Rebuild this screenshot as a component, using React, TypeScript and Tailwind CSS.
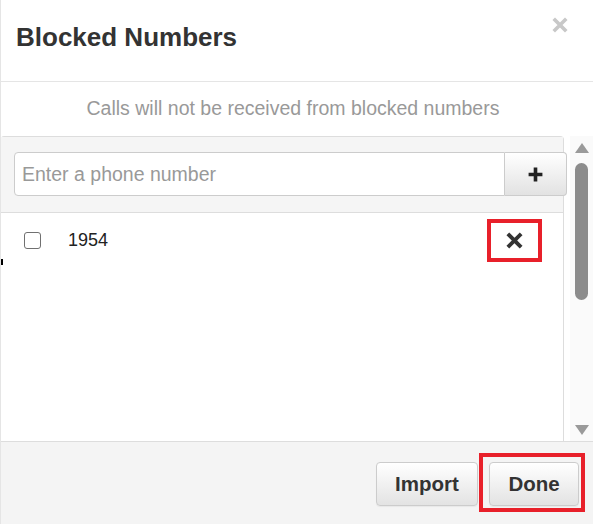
import { useState } from "react";

function CloseGlyph({ className }: { className?: string }) {
  return (
    <svg viewBox="0 0 16 16" className={className} fill="none">
      <path d="M3 3 L13 13 M13 3 L3 13" stroke="currentColor" strokeWidth="3.6" strokeLinecap="square" />
    </svg>
  );
}

function PlusGlyph({ className }: { className?: string }) {
  return (
    <svg viewBox="0 0 16 16" className={className} fill="none">
      <path d="M8 1.5 V14.5 M1.5 8 H14.5" stroke="currentColor" strokeWidth="3.4" />
    </svg>
  );
}

function FakeScrollbar() {
  return (
    <div className="w-[23px] ml-[6px] bg-[#fafafa] flex flex-col items-center">
      <div className="mt-[7px] w-0 h-0 border-l-[7px] border-r-[7px] border-b-[10px] border-l-transparent border-r-transparent border-b-[#9a9a9a]" />
      <div className="mt-[10px] w-[13px] h-[137px] rounded-full bg-[#8c8c8c]" />
      <div className="mt-auto mb-[6px] w-0 h-0 border-l-[7px] border-r-[7px] border-t-[10px] border-l-transparent border-r-transparent border-t-[#9a9a9a]" />
    </div>
  );
}

export default function App() {
  const [phone, setPhone] = useState("");
  const numbers = ["1954"];

  return (
    <div className="relative w-[593px] h-[524px] bg-white border-l border-[#e5e5e5] flex flex-col font-['Liberation_Sans',Arial,sans-serif] text-[#333] overflow-hidden">
      {/* header */}
      <div className="h-[82px] shrink-0 border-b border-[#e5e5e5] flex justify-between pl-[15px] pr-[25px]">
        <h4 className="pt-[24px] text-[26px] leading-[26px] font-bold text-[#333]">Blocked Numbers</h4>
        <button className="mt-[17px] h-[16px] w-[16px] text-[#c8c8c8]">
          <CloseGlyph className="w-[16px] h-[16px]" />
        </button>
      </div>

      <div className="h-[54px] shrink-0 flex items-center justify-center pr-[8px] text-[19.5px] text-[#999]">
        Calls will not be received from blocked numbers
      </div>

      {/* body */}
      <div className="h-[305px] shrink-0 flex">
        <div className="w-[563px] flex flex-col border-t border-r border-[#ddd] rounded-tr-[4px] rounded-tl-[3px]">
          <div className="h-[76px] shrink-0 bg-[#f5f5f5] border-b border-[#ddd] pt-[15px] pl-[13px]">
            <div className="flex w-[553px] h-[44px]">
              <input
                value={phone}
                onChange={(e) => setPhone(e.target.value)}
                placeholder="Enter a phone number"
                className="flex-1 min-w-0 h-full bg-white border border-[#ccc] rounded-l-[4px] px-[7px] text-[19.5px] text-[#555] placeholder:text-[#999] outline-none"
              />
              <button className="w-[62px] h-full flex items-center justify-center border border-l-0 border-[#ccc] rounded-r-[4px] bg-gradient-to-b from-white to-[#e2e2e2] text-[#222]">
                <PlusGlyph className="w-[17px] h-[17px]" />
              </button>
            </div>
          </div>
          <div className="flex-1 bg-white">
            {numbers.map((n) => (
              <div key={n} className="flex items-center pt-[6px] pl-[23px] pr-[21px]">
                <span className="w-[17px] h-[17px] border-[1.5px] border-[#707070] rounded-[3px] bg-white" />
                <span className="ml-[27px] text-[18px] text-[#222]">{n}</span>
                <span className="ml-auto w-[55px] h-[43px] border-4 border-[#e8202a] flex items-center justify-center text-[#333]">
                  <CloseGlyph className="w-[17px] h-[17px]" />
                </span>
              </div>
            ))}
          </div>
        </div>
        <FakeScrollbar />
      </div>

      {/* footer */}
      <div className="flex-1 bg-[#f4f4f4] border-t border-[#ddd] flex justify-end items-start pt-[11px] pr-[8px]">
        <button className="mt-[9px] w-[102px] h-[44px] rounded-[4px] border border-[#ccc] bg-gradient-to-b from-white to-[#e3e3e3] text-[20.5px] font-bold text-[#333] shadow-[0_1px_1px_rgba(0,0,0,0.05)]">
          Import
        </button>
        <div className="ml-[1px] border-4 border-[#e8202a] pt-[5px] pl-[6px] pr-[2px] pb-[2px]">
          <button className="w-[90px] h-[44px] rounded-[4px] border border-[#ccc] bg-gradient-to-b from-white to-[#e3e3e3] text-[20.5px] font-bold text-[#333] shadow-[0_1px_1px_rgba(0,0,0,0.05)]">
            Done
          </button>
        </div>
      </div>

      <div className="absolute left-0 top-[259px] w-[2px] h-[6px] bg-black" />
    </div>
  );
}
